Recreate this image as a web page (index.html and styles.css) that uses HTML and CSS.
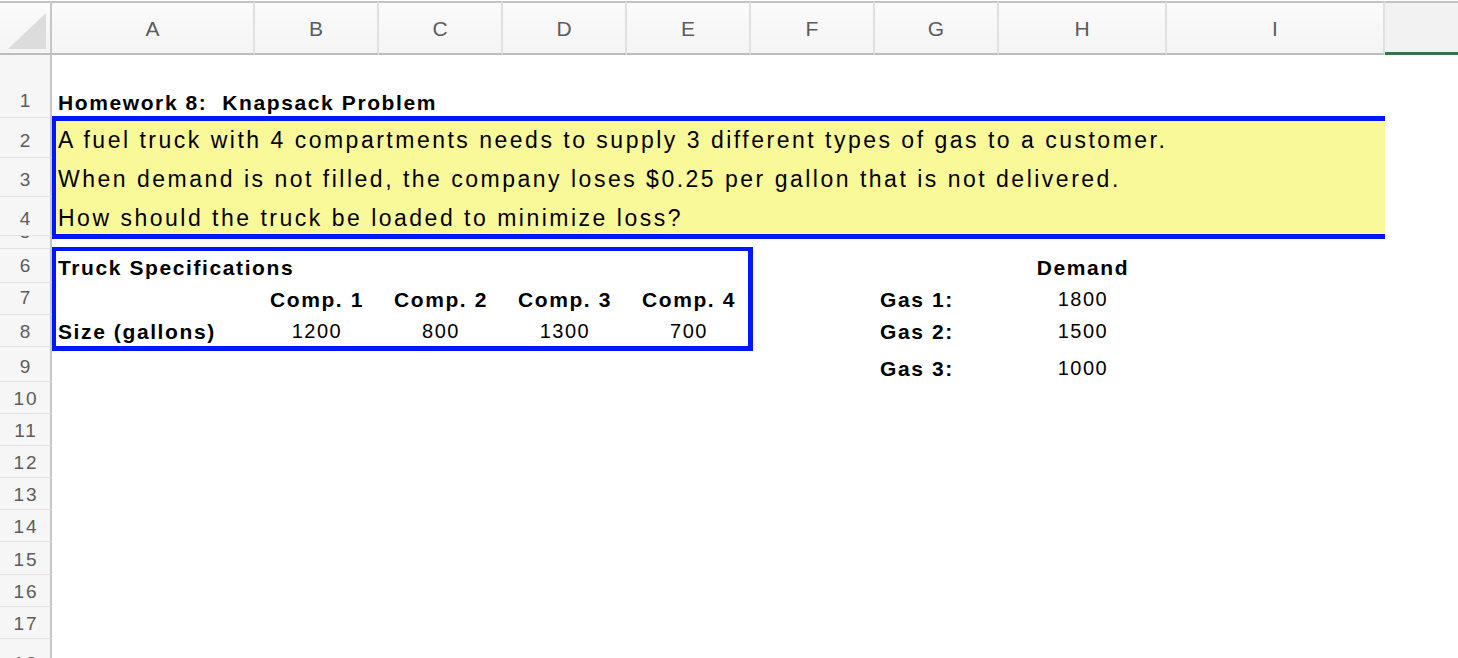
FILE: index.html
```html
<!DOCTYPE html>
<html>
<head>
<meta charset="utf-8">
<title>Homework 8</title>
<link rel="stylesheet" href="styles.css">
</head>
<body>
<div class="sheet">
  <div class="corner"><span class="tri"></span></div>
  <div class="ch">A</div>
  <div class="ch">B</div>
  <div class="ch">C</div>
  <div class="ch">D</div>
  <div class="ch">E</div>
  <div class="ch">F</div>
  <div class="ch">G</div>
  <div class="ch">H</div>
  <div class="ch">I</div>
  <div class="ch ch-j"></div>

  <div class="rh r1">1</div>
  <div class="rh r2">2</div>
  <div class="rh r3">3</div>
  <div class="rh r4">4</div>
  <div class="rh r5"><span class="clip5">5</span></div>
  <div class="rh r6">6</div>
  <div class="rh r7">7</div>
  <div class="rh low r8">8</div>
  <div class="rh low r9">9</div>
  <div class="rh low r10">10</div>
  <div class="rh low r11">11</div>
  <div class="rh low r12">12</div>
  <div class="rh low r13">13</div>
  <div class="rh low r14">14</div>
  <div class="rh low r15">15</div>
  <div class="rh low r16">16</div>
  <div class="rh low r17">17</div>
  <div class="rh low r18">18</div>

  <div class="cell bold r1 span-all">Homework 8:  Knapsack Problem</div>

  <div class="note"></div>
  <div class="cell big r2 span-all">A fuel truck with 4 compartments needs to supply 3 different types of gas to a customer.</div>
  <div class="cell big r3 span-all">When demand is not filled, the company loses $0.25 per gallon that is not delivered.</div>
  <div class="cell big r4 span-all">How should the truck be loaded to minimize loss?</div>

  <div class="spec"></div>
  <div class="cell bold r6 span-ab">Truck Specifications</div>
  <div class="cell bold center r7 cB">Comp. 1</div>
  <div class="cell bold center r7 cC">Comp. 2</div>
  <div class="cell bold center r7 cD">Comp. 3</div>
  <div class="cell bold center r7 cE">Comp. 4</div>
  <div class="cell bold r8 cA">Size (gallons)</div>
  <div class="cell center r8 cB">1200</div>
  <div class="cell center r8 cC">800</div>
  <div class="cell center r8 cD">1300</div>
  <div class="cell center r8 cE">700</div>

  <div class="cell bold center r6 cH">Demand</div>
  <div class="cell bold r7 cG">Gas 1:</div>
  <div class="cell bold r8 cG">Gas 2:</div>
  <div class="cell bold r9 cG">Gas 3:</div>
  <div class="cell center r7 cH">1800</div>
  <div class="cell center r8 cH">1500</div>
  <div class="cell center r9 cH">1000</div>
</div>
</body>
</html>
```

FILE: styles.css
```css
html, body {
  margin: 0;
  padding: 0;
  background: #ffffff;
}

.sheet {
  display: grid;
  grid-template-columns: 52px 203px repeat(6, 124px) 168px 218px 1fr;
  grid-template-rows: 55px 63px 40px 39px 39px 13px 34px 32px 32px 35px repeat(8, 32.1px) 40px;
  height: 658px;
  overflow: hidden;
  font-family: "Liberation Sans", Arial, Helvetica, sans-serif;
  color: #000;
}

/* column headers */
.corner,
.ch {
  grid-row: 1;
  box-sizing: border-box;
  margin-top: 1px;
  border-top: 2px solid #c3c3c3;
  border-bottom: 2px solid #bdbdbd;
  background: linear-gradient(#fbfbfb, #f4f4f4);
}

.corner {
  grid-column: 1;
  border-right: 2px solid #c6c6c6;
  display: flex;
  align-items: flex-end;
  justify-content: flex-end;
  padding: 0 4px 4px 0;
}

.tri {
  width: 38px;
  height: 36px;
  background: #dcdcdc;
  clip-path: polygon(100% 0, 100% 100%, 0 100%);
}

.ch {
  border-right: 2px solid #e0e0e0;
  display: flex;
  align-items: center;
  justify-content: center;
  padding-top: 2px;
  font-size: 21px;
  color: #5c5c5c;
}

.ch-j {
  border-right: 0;
  border-bottom: 3px solid #3a7148;
  background: #f2f2f2;
}

/* row headers */
.rh {
  grid-column: 1;
  box-sizing: border-box;
  background: #f6f6f6;
  border-right: 2px solid #c6c6c6;
  border-bottom: 1px solid #e2e2e2;
  display: flex;
  align-items: flex-end;
  justify-content: center;
  padding: 0 0 5px 2px;
  font-size: 19px;
  line-height: 22px;
  letter-spacing: 2px;
  color: #5c5c5c;
}

.rh.low {
  padding-bottom: 3px;
}

.rh.r5 {
  align-items: flex-start;
  padding: 0 0 0 2px;
  overflow: hidden;
}

.clip5 {
  margin-top: -15px;
}

.r1 { grid-row: 2; }
.r2 { grid-row: 3; }
.r3 { grid-row: 4; }
.r4 { grid-row: 5; }
.r5 { grid-row: 6; }
.r6 { grid-row: 7; }
.r7 { grid-row: 8; }
.r8 { grid-row: 9; }
.r9 { grid-row: 10; }
.r10 { grid-row: 11; }
.r11 { grid-row: 12; }
.r12 { grid-row: 13; }
.r13 { grid-row: 14; }
.r14 { grid-row: 15; }
.r15 { grid-row: 16; }
.r16 { grid-row: 17; }
.r17 { grid-row: 18; }
.r18 { grid-row: 19; }

.cA { grid-column: 2; }
.cB { grid-column: 3; }
.cC { grid-column: 4; }
.cD { grid-column: 5; }
.cE { grid-column: 6; }
.cG { grid-column: 8; }
.cH { grid-column: 9; }
.span-all { grid-column: 2 / 11; }
.span-ab { grid-column: 2 / 4; }

/* cells */
.cell {
  z-index: 2;
  display: flex;
  align-items: flex-end;
  padding: 0 5px 4px 6px;
  white-space: pre;
  font-size: 20px;
  line-height: 23px;
  letter-spacing: 1.5px;
}

.cell.bold {
  font-weight: bold;
  font-size: 21px;
  letter-spacing: 1.6px;
}

.cell.center {
  justify-content: center;
  padding-left: 0;
  padding-right: 0;
}

.cell.cG {
  padding-left: 5px;
}

.cell.r9 {
  padding-bottom: 2px;
}

.cell.big {
  font-size: 23px;
  line-height: 26px;
  padding-bottom: 5px;
  letter-spacing: 2.5px;
}

/* bordered blocks */
.note {
  grid-row: 3 / 6;
  grid-column: 2 / 11;
  z-index: 1;
  margin: -2px 0 -3px 0;
  border: 5px solid #0016ff;
  border-left-width: 4px;
  border-right: 0;
  background: #f9f99a;
}

.spec {
  grid-row: 7 / 10;
  grid-column: 2 / 7;
  z-index: 1;
  margin: -2px -2px -4px 0;
  border: 5px solid #0016ff;
  border-top-width: 4px;
  border-left-width: 4px;
}
```
